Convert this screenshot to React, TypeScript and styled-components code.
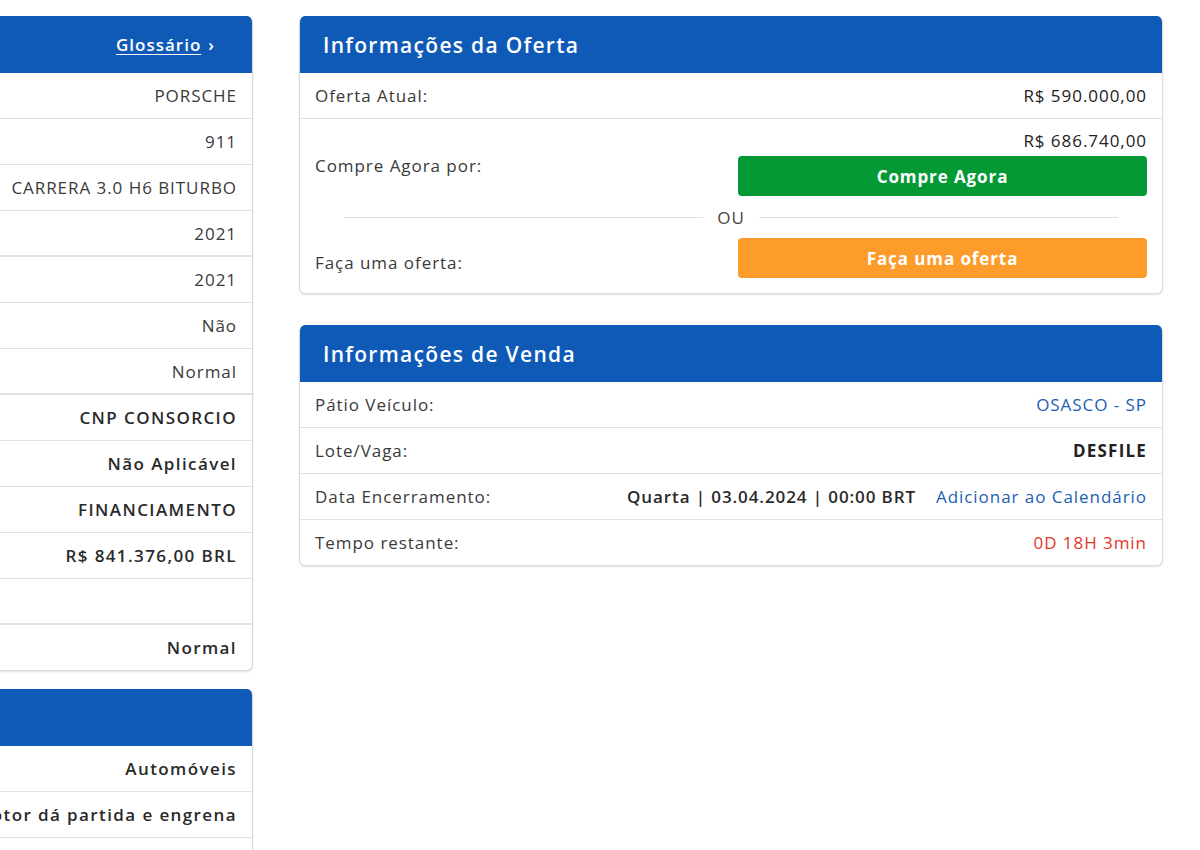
import React from 'react';
import styled, { createGlobalStyle } from 'styled-components';

const Blue = '#0e5ab6';
const Border = '#dcdcdc';

const GlobalStyle = createGlobalStyle`
  html, body {
    margin: 0;
    padding: 0;
    background: #ffffff;
    overflow: hidden;
  }
  body {
    font-family: 'Open Sans', 'Noto Sans', sans-serif;
    font-size: 17px;
    letter-spacing: 0.95px;
    color: #333333;
  }
`;

const Page = styled.div`
  display: flex;
  align-items: flex-start;
  gap: 46px;
  padding-top: 16px;
  width: 1200px;
  height: 850px;
  overflow: hidden;
`;

const LeftColumn = styled.div`
  flex: 0 0 600px;
  margin-left: -347px;
  display: flex;
  flex-direction: column;
  gap: 18px;
`;

const RightColumn = styled.div`
  flex: 0 0 864px;
  display: flex;
  flex-direction: column;
  gap: 31px;
`;

const Panel = styled.section`
  background: #fff;
  border: 1px solid ${Border};
  border-top: none;
  border-radius: 6px;
  box-shadow: 0 1px 2px rgba(0, 0, 0, 0.12);
  overflow: hidden;
`;

const PanelHeader = styled.header`
  height: 57px;
  background: ${Blue};
  color: #fff;
  display: flex;
  align-items: center;
  justify-content: space-between;
  padding: 0 37px 0 23px;
`;

const Title = styled.h2`
  margin: 0;
  font-size: 21px;
  font-weight: 600;
  letter-spacing: 1.3px;
`;

const HeaderLink = styled.a`
  margin-left: auto;
  color: #fff;
  font-size: 17px;
  font-weight: 600;
  letter-spacing: 1px;
  text-decoration: underline;
  text-underline-offset: 3px;

  span {
    display: inline-block;
    margin-left: 7px;
    text-decoration: none;
  }
`;

const SpecRow = styled.div<{ $thick?: boolean }>`
  height: ${(p) => (p.$thick ? 44 : 45)}px;
  display: flex;
  align-items: center;
  justify-content: flex-end;
  padding: 0 15px;
  white-space: nowrap;
  border-bottom: ${(p) => (p.$thick ? 2 : 1)}px solid #e1e1e1;

  &:last-child {
    border-bottom: none;
  }
`;

const SpecValue = styled.span<{ $bold?: boolean }>`
  font-weight: ${(p) => (p.$bold ? 600 : 400)};
  letter-spacing: ${(p) => (p.$bold ? 1.4 : 0.95)}px;
  color: ${(p) => (p.$bold ? '#2a2a2a' : '#3a3a3a')};
`;

const InfoRow = styled.div`
  height: 45px;
  display: flex;
  align-items: center;
  justify-content: space-between;
  padding: 0 15px;
  border-bottom: 1px solid #e1e1e1;

  &:last-child {
    border-bottom: none;
  }
`;

const Label = styled.span`
  color: #3a3a3a;
`;

const Value = styled.span<{ $tone?: 'link' | 'red' | 'strong' | 'medium' }>`
  white-space: nowrap;
  font-weight: ${(p) => (p.$tone === 'strong' ? 700 : 400)};
  letter-spacing: ${(p) => (p.$tone === 'strong' ? 1.2 : 0.95)}px;
  color: ${(p) =>
    p.$tone === 'link'
      ? '#1d5fb0'
      : p.$tone === 'red'
        ? '#e5352b'
        : p.$tone === 'strong' || p.$tone === 'medium'
          ? '#222'
          : '#333'};
`;

const DateGroup = styled.div`
  display: flex;
  gap: 20px;
  align-items: center;
`;

const DateText = styled.span`
  font-weight: 600;
  letter-spacing: 0.9px;
  color: #2a2a2a;
`;

const CalendarLink = styled.a`
  color: #1d5fb0;
  text-decoration: none;
`;

const BuyBlock = styled.div`
  display: grid;
  grid-template-columns: 1fr 409px;
  padding: 11px 15px 15px;
`;

const BuyLabel = styled.div<{ $shift: number }>`
  align-self: center;
  padding-top: ${(p) => p.$shift}px;
  color: #3a3a3a;
`;

const BuyActions = styled.div`
  display: flex;
  flex-direction: column;
  align-items: stretch;
`;

const Price = styled.div`
  text-align: right;
  line-height: 22px;
  color: #222;
  margin-bottom: 4px;
`;

const ActionButton = styled.button<{ $color: string }>`
  height: 40px;
  border: none;
  border-radius: 4px;
  background: ${(p) => p.$color};
  color: #fff;
  font-family: inherit;
  font-size: 17px;
  letter-spacing: 0.9px;
  font-weight: 700;
  cursor: pointer;
`;

const Divider = styled.div`
  grid-column: 1 / -1;
  height: 42px;
  display: flex;
  align-items: center;
  gap: 14px;
  padding: 0 29px;
  color: #444;

  &::before,
  &::after {
    content: '';
    flex: 1;
    height: 1px;
    background: #dedede;
  }
`;

const specs: { value: string; bold?: boolean; thick?: boolean }[] = [
  { value: 'PORSCHE' },
  { value: '911' },
  { value: 'CARRERA 3.0 H6 BITURBO' },
  { value: '2021', thick: true },
  { value: '2021' },
  { value: 'Não' },
  { value: 'Normal', thick: true },
  { value: 'CNP CONSORCIO', bold: true },
  { value: 'Não Aplicável', bold: true },
  { value: 'FINANCIAMENTO', bold: true },
  { value: 'R$ 841.376,00 BRL', bold: true },
  { value: '', thick: true },
  { value: 'Normal', bold: true },
];

const condition = [{ value: 'Automóveis' }, { value: 'Motor dá partida e engrena' }, { value: '' }];

export default function App() {
  return (
    <>
      <GlobalStyle />
      <Page>
        <LeftColumn>
          <Panel>
            <PanelHeader>
              <HeaderLink href="#">
                Glossário<span>›</span>
              </HeaderLink>
            </PanelHeader>
            {specs.map((s, i) => (
              <SpecRow key={i} $thick={s.thick}>
                <SpecValue $bold={s.bold}>{s.value}</SpecValue>
              </SpecRow>
            ))}
          </Panel>
          <Panel>
            <PanelHeader />
            {condition.map((s, i) => (
              <SpecRow key={i}>
                <SpecValue $bold>{s.value}</SpecValue>
              </SpecRow>
            ))}
          </Panel>
        </LeftColumn>

        <RightColumn>
          <Panel>
            <PanelHeader>
              <Title>Informações da Oferta</Title>
            </PanelHeader>
            <InfoRow>
              <Label>Oferta Atual:</Label>
              <Value $tone="medium">R$ 590.000,00</Value>
            </InfoRow>
            <BuyBlock>
              <BuyLabel $shift={5}>Compre Agora por:</BuyLabel>
              <BuyActions>
                <Price>R$ 686.740,00</Price>
                <ActionButton $color="#039a36">Compre Agora</ActionButton>
              </BuyActions>
              <Divider>OU</Divider>
              <BuyLabel $shift={9}>Faça uma oferta:</BuyLabel>
              <BuyActions>
                <ActionButton $color="#fd9c2b">Faça uma oferta</ActionButton>
              </BuyActions>
            </BuyBlock>
          </Panel>

          <Panel>
            <PanelHeader>
              <Title>Informações de Venda</Title>
            </PanelHeader>
            <InfoRow>
              <Label>Pátio Veículo:</Label>
              <Value $tone="link">OSASCO - SP</Value>
            </InfoRow>
            <InfoRow>
              <Label>Lote/Vaga:</Label>
              <Value $tone="strong">DESFILE</Value>
            </InfoRow>
            <InfoRow>
              <Label>Data Encerramento:</Label>
              <DateGroup>
                <DateText>Quarta | 03.04.2024 | 00:00 BRT</DateText>
                <CalendarLink href="#">Adicionar ao Calendário</CalendarLink>
              </DateGroup>
            </InfoRow>
            <InfoRow>
              <Label>Tempo restante:</Label>
              <Value $tone="red">0D 18H 3min</Value>
            </InfoRow>
          </Panel>
        </RightColumn>
      </Page>
    </>
  );
}
